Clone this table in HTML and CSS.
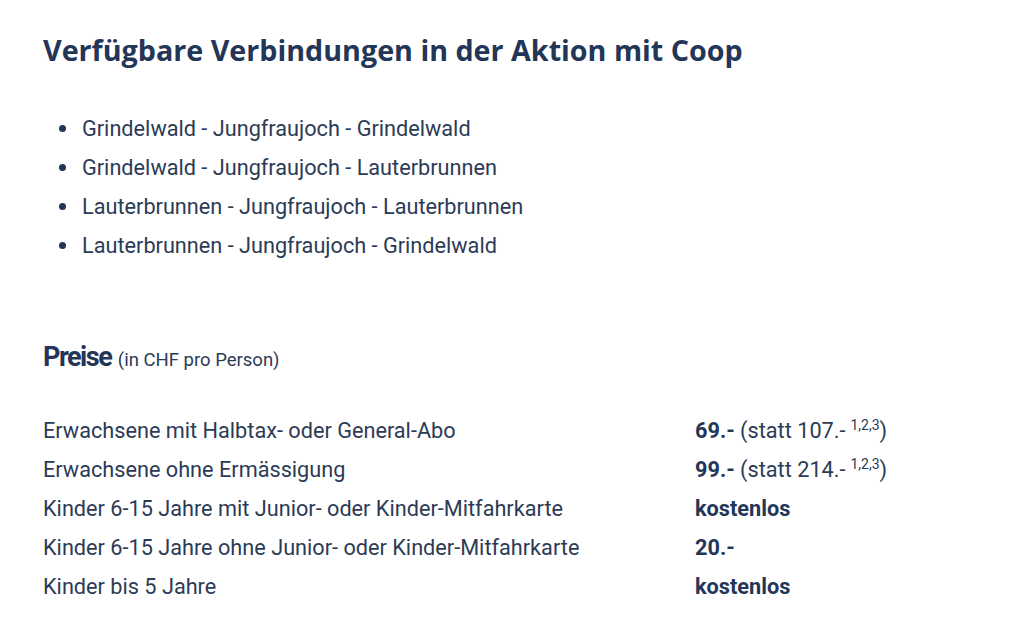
FILE: index.html
```html
<!DOCTYPE html>
<html lang="de">
<head>
<meta charset="utf-8">
<link rel="stylesheet" href="styles.css">
</head>
<body>
<main class="page">
  <h2 class="title">Verfügbare Verbindungen in der Aktion mit Coop</h2>
  <ul class="routes">
    <li>Grindelwald - Jungfraujoch - Grindelwald</li>
    <li>Grindelwald - Jungfraujoch - Lauterbrunnen</li>
    <li>Lauterbrunnen - Jungfraujoch - Lauterbrunnen</li>
    <li>Lauterbrunnen - Jungfraujoch - Grindelwald</li>
  </ul>
  <h3 class="prices-title"><span class="prices-word">Preise</span> <span class="prices-note">(in CHF pro Person)</span></h3>
  <div class="prices">
    <div class="row"><span class="label">Erwachsene mit Halbtax- oder General-Abo</span><span class="value"><b>69.-</b> (statt 107.-<sup>1,2,3</sup>)</span></div>
    <div class="row"><span class="label">Erwachsene ohne Ermässigung</span><span class="value"><b>99.-</b> (statt 214.-<sup>1,2,3</sup>)</span></div>
    <div class="row"><span class="label">Kinder 6-15 Jahre mit Junior- oder Kinder-Mitfahrkarte</span><span class="value"><b>kostenlos</b></span></div>
    <div class="row"><span class="label">Kinder 6-15 Jahre ohne Junior- oder Kinder-Mitfahrkarte</span><span class="value"><b>20.-</b></span></div>
    <div class="row"><span class="label">Kinder bis 5 Jahre</span><span class="value"><b>kostenlos</b></span></div>
  </div>
</main>
</body>
</html>
```
FILE: styles.css
```css
html, body {
  margin: 0;
  padding: 0;
  background: #ffffff;
}
body {
  font-family: Roboto, "Liberation Sans", sans-serif;
  color: #2c3b55;
}
.page {
  padding: 30px 0 0 43px;
}
.title {
  font-family: "Open Sans", Roboto, sans-serif;
  font-weight: 700;
  font-size: 28.7px;
  line-height: 40px;
  margin: 0;
  color: #233657;
}
.routes {
  list-style: none;
  margin: 39px 0 0 0;
  padding: 0 0 0 16px;
}
.routes li {
  font-size: 21.7px;
  line-height: 39px;
  display: flex;
  align-items: center;
  gap: 16px;
}
.routes li::before {
  content: "";
  width: 7px;
  height: 7px;
  border-radius: 50%;
  background: #233657;
  flex: none;
}
.prices-title {
  margin: 77px 0 0 0;
  line-height: 30px;
  font-weight: 400;
}
.prices-word {
  font-family: Roboto, sans-serif;
  font-weight: 700;
  font-size: 27px;
  letter-spacing: -1.5px;
  color: #233657;
}
.prices-note {
  font-size: 18.5px;
  margin-left: 2px;
}
.prices {
  margin-top: 36px;
}
.row {
  display: grid;
  grid-template-columns: 652px auto;
  font-size: 21.7px;
  line-height: 39px;
}
.value b {
  font-weight: 700;
  color: #233657;
}
.value sup {
  font-size: 14px;
  line-height: 0;
  margin-left: 5px;
}
```
